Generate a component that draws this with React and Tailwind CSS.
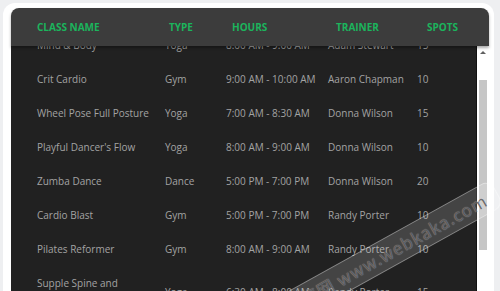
import React from "react";

const rows = [
  ["Mind & Body", "Yoga", "8:00 AM - 9:00 AM", "Adam Stewart", "15"],
  ["Crit Cardio", "Gym", "9:00 AM - 10:00 AM", "Aaron Chapman", "10"],
  ["Wheel Pose Full Posture", "Yoga", "7:00 AM - 8:30 AM", "Donna Wilson", "15"],
  ["Playful Dancer's Flow", "Yoga", "8:00 AM - 9:00 AM", "Donna Wilson", "10"],
  ["Zumba Dance", "Dance", "5:00 PM - 7:00 PM", "Donna Wilson", "20"],
  ["Cardio Blast", "Gym", "5:00 PM - 7:00 PM", "Randy Porter", "10"],
  ["Pilates Reformer", "Gym", "8:00 AM - 9:00 AM", "Randy Porter", "10"],
  ["Supple Spine and Shoulders", "Yoga", "6:30 AM - 8:00 AM", "Randy Porter", "15"],
];

const font = { fontFamily: '"Open Sans", "Noto Sans", sans-serif' };

export default function App() {
  return (
    <div className="w-[500px] h-[291px] bg-[#eeeff1] overflow-hidden relative" style={font}>
      <div className="mt-[3px] ml-[3px] w-[491px] h-[300px] bg-white rounded-[12px] pl-[8px] pt-[5px]">
        <div className="w-[478px] flex flex-col">
          <div className="h-[38px] bg-[#3c3c3c] rounded-t-[8px] grid grid-cols-[158px_63px_104px_91px_1fr] items-center text-[10px] font-bold text-[#1bb45c] uppercase shadow-[0_2px_3px_rgba(0,0,0,0.35)] relative z-10">
            <div className="pl-[26px]">Class Name</div>
            <div>Type</div>
            <div>Hours</div>
            <div>Trainer</div>
            <div>Spots</div>
          </div>
          <div className="flex h-[260px]">
            <div className="w-[466px] bg-[#212121] overflow-hidden border-r border-[#111]">
              <div className="-mt-[18px]">
                {rows.map((r, i) => (
                  <div key={i} className="grid grid-cols-[154px_61px_102px_89px_1fr] items-center py-[8px] text-[10px] leading-[18px] text-[#a3a3a3]">
                    <div className="pl-[26px]"><div className="w-[116px]">{r[0]}</div></div>
                    <div>{r[1]}</div>
                    <div className="whitespace-nowrap">{r[2]}</div>
                    <div className="whitespace-nowrap">{r[3]}</div>
                    <div>{r[4]}</div>
                  </div>
                ))}
              </div>
            </div>
            <div className="w-[12px] bg-white flex flex-col items-center pt-[5px]">
              <div className="w-0 h-0 border-l-[3px] border-r-[3px] border-b-[3px] border-l-transparent border-r-transparent border-b-[#606060]" />
              <div className="mt-[26px] w-[8px] h-[170px] bg-[#c6c6c6]" />
            </div>
          </div>
        </div>
      </div>
      <div className="absolute left-[139px] top-[270px] w-[382px] h-[30px] rounded-[10px] bg-[rgba(255,255,255,0.16)] border border-[rgba(255,255,255,0.35)] -rotate-[29deg] origin-center flex items-center justify-end pr-[12px] pointer-events-none">
        <span
          className="text-[17px] text-[rgba(70,70,70,0.75)] tracking-[1px] whitespace-nowrap [text-shadow:0_0_1px_rgba(255,255,255,0.6)]"
          style={{ fontFamily: '"Noto Sans CJK SC", "Liberation Sans", sans-serif' }}
        >
          卡卡测速网 www.webkaka.com
        </span>
      </div>
    </div>
  );
}
